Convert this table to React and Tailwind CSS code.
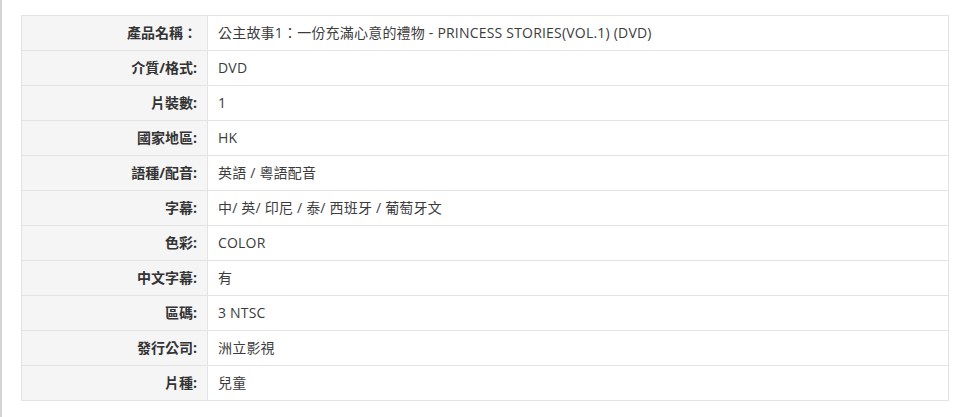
import React from 'react';

const rows = [
  { label: '產品名稱：', value: '公主故事1：一份充滿心意的禮物 - PRINCESS STORIES(VOL.1) (DVD)' },
  { label: '介質/格式:', value: 'DVD' },
  { label: '片裝數:', value: '1' },
  { label: '國家地區:', value: 'HK' },
  { label: '語種/配音:', value: '英語 / 粵語配音' },
  { label: '字幕:', value: '中/ 英/ 印尼 / 泰/ 西班牙 / 葡萄牙文' },
  { label: '色彩:', value: 'COLOR' },
  { label: '中文字幕:', value: '有' },
  { label: '區碼:', value: '3 NTSC' },
  { label: '發行公司:', value: '洲立影視' },
  { label: '片種:', value: '兒童' },
];

const App = () => {
  return (
    <div
      className="h-[417px] w-[969px] bg-white border-l-2 border-[#d4d4d4] pl-[19px] pt-[15px]"
      style={{ fontFamily: '"Open Sans", "Noto Sans CJK TC", sans-serif' }}
    >
      {/* Product spec table */}
      <table className="w-[928px] border-collapse text-[14px]">
        <tbody>
          {rows.map((row) => (
            <tr key={row.label} className="h-[35px]">
              <th className="w-[186px] border border-[#e3e3e3] bg-[#f5f5f5] pr-[10px] pb-[2px] text-right font-bold text-[#333]">
                {row.label}
              </th>
              <td className="border border-[#e3e3e3] pl-[10px] pb-[2px] text-left tracking-[0.2px] text-[#3c3c3c]">
                {row.value}
              </td>
            </tr>
          ))}
        </tbody>
      </table>
    </div>
  );
};

export default App;
